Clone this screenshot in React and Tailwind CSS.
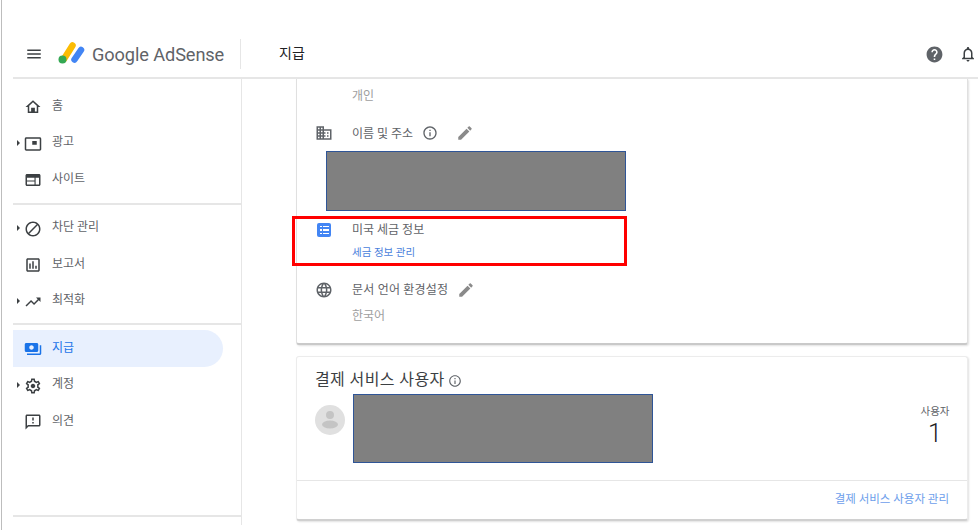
import React from "react";

const KR = "font-['Roboto','Noto_Sans_CJK_KR',sans-serif]";

const paths = {
  menu: "M3 18h18v-2H3v2zm0-5h18v-2H3v2zm0-7v2h18V6H3z",
  home: "M12 5.69l5 4.5V18H7v-7.81l5-4.5M12 3L2 12h3v8h14v-8h3L12 3zM9.500 13h5v5h-5z",
  ads: "M17 8h-6v5h6V8zm4-5H3c-1.1 0-2 .9-2 2v14c0 1.1.9 1.98 2 1.98h18c1.1 0 2-.88 2-1.98V5c0-1.1-.9-2-2-2zm0 16.01H3V4.98h18v14.03z",
  sites: "M20 4H4c-1.1 0-2 .9-2 2v12c0 1.1.9 2 2 2h16c1.1 0 2-.9 2-2V6c0-1.1-.9-2-2-2zM4 18v-4h10v4H4zm0-5.5V9h10v3.5H4zM20 18h-4.500V9H20v9z",
  block: "M12 2C6.48 2 2 6.48 2 12s4.48 10 10 10 10-4.48 10-10S17.52 2 12 2zM4 12c0-4.42 3.58-8 8-8 1.85 0 3.55.63 4.9 1.69L5.69 16.9C4.63 15.55 4 13.85 4 12zm8 8c-1.85 0-3.55-.63-4.9-1.69L18.31 7.1C19.37 8.45 20 10.15 20 12c0 4.42-3.58 8-8 8z",
  report: "M19 3H5c-1.1 0-2 .9-2 2v14c0 1.1.9 2 2 2h14c1.1 0 2-.9 2-2V5c0-1.1-.9-2-2-2zm0 16H5V5h14v14zM7 10h2v7H7zm4-3h2v10h-2zm4 6h2v4h-2z",
  trend: "M16 6l2.29 2.29-4.88 4.88-4-4L2 16.59 3.41 18l6-6 4 4 6.3-6.29L22 12V6z",
  pay: "M19 14V6c0-1.1-.9-2-2-2H3c-1.1 0-2 .9-2 2v8c0 1.1.9 2 2 2h14c1.1 0 2-.9 2-2zm-9-1c-1.66 0-3-1.34-3-3s1.34-3 3-3 3 1.34 3 3-1.34 3-3 3zm13-6v11c0 1.1-.9 2-2 2H4v-2h17V7h2z",
  gear: "M19.43 12.98c.04-.32.07-.64.07-.98 0-.34-.03-.66-.07-.98l2.11-1.65c.19-.15.24-.42.12-.64l-2-3.46c-.09-.16-.26-.25-.44-.25-.06 0-.12.01-.17.03l-2.49 1c-.52-.4-1.08-.73-1.69-.98l-.38-2.65C14.46 2.18 14.25 2 14 2h-4c-.25 0-.46.18-.49.42l-.38 2.65c-.61.25-1.17.59-1.69.98l-2.49-1c-.06-.02-.12-.03-.18-.03-.17 0-.34.09-.43.25l-2 3.46c-.13.22-.07.49.12.64l2.11 1.65c-.04.32-.07.65-.07.98 0 .33.03.66.07.98l-2.11 1.65c-.19.15-.24.42-.12.64l2 3.46c.09.16.26.25.44.25.06 0 .12-.01.17-.03l2.49-1c.52.4 1.08.73 1.69.98l.38 2.65c.03.24.24.42.49.42h4c.25 0 .46-.18.49-.42l.38-2.65c.61-.25 1.17-.59 1.69-.98l2.49 1c.06.02.12.03.18.03.17 0 .34-.09.43-.25l2-3.46c.12-.22.07-.49-.12-.64l-2.11-1.65zm-1.98-1.71c.04.31.05.52.05.73 0 .21-.02.43-.05.73l-.14 1.13.89.7 1.08.84-.7 1.21-1.27-.51-1.04-.42-.9.68c-.43.32-.84.56-1.25.73l-1.06.43-.16 1.13-.2 1.35h-1.4l-.19-1.35-.16-1.13-1.06-.43c-.43-.18-.83-.41-1.23-.71l-.91-.7-1.06.43-1.27.51-.7-1.21 1.08-.84.89-.7-.14-1.13c-.03-.31-.05-.54-.05-.74s.02-.43.05-.73l.14-1.13-.89-.7-1.08-.84.7-1.21 1.27.51 1.04.42.9-.68c.43-.32.84-.56 1.25-.73l1.06-.43.16-1.13.2-1.35h1.39l.19 1.35.16 1.13 1.06.43c.43.18.83.41 1.23.71l.91.7 1.06-.43 1.27-.51.7 1.21-1.07.85-.89.7.14 1.13zM12 9c-1.66 0-3 1.34-3 3s1.34 3 3 3 3-1.34 3-3-1.34-3-3-3z",
  feedback: "M20 2H4c-1.1 0-1.99.9-1.99 2L2 22l4-4h14c1.1 0 2-.9 2-2V4c0-1.1-.9-2-2-2zm0 14H5.17L4 17.17V4h16v12zm-9-4h2v2h-2zm0-6h2v4h-2z",
  domain: "M12 7V3H2v18h20V7H12zM6 19H4v-2h2v2zm0-4H4v-2h2v2zm0-4H4V9h2v2zm0-4H4V5h2v2zm4 12H8v-2h2v2zm0-4H8v-2h2v2zm0-4H8V9h2v2zm0-4H8V5h2v2zm10 12h-8v-2h2v-2h-2v-2h2v-2h-2V9h8v10zm-2-8h-2v2h2v-2zm0 4h-2v2h2v-2z",
  info: "M11 7h2v2h-2zm0 4h2v6h-2zm1-9C6.48 2 2 6.48 2 12s4.48 10 10 10 10-4.48 10-10S17.52 2 12 2zm0 18c-4.41 0-8-3.59-8-8s3.59-8 8-8 8 3.59 8 8-3.59 8-8 8z",
  edit: "M3 17.25V21h3.75L17.81 9.94l-3.75-3.75L3 17.25zM20.71 7.04c.39-.39.39-1.02 0-1.41l-2.34-2.34c-.39-.39-1.02-.39-1.41 0l-1.83 1.83 3.75 3.75 1.83-1.83z",
  globe: "M11.99 2C6.47 2 2 6.48 2 12s4.47 10 9.99 10C17.52 22 22 17.52 22 12S17.52 2 11.99 2zm6.93 6h-2.95c-.32-1.25-.78-2.45-1.38-3.56 1.84.63 3.37 1.91 4.33 3.56zM12 4.04c.83 1.2 1.48 2.53 1.91 3.96h-3.82c.43-1.43 1.08-2.76 1.91-3.96zM4.26 14C4.1 13.36 4 12.69 4 12s.1-1.36.26-2h3.38c-.08.66-.14 1.32-.14 2 0 .68.06 1.34.14 2H4.26zm.82 2h2.95c.32 1.25.78 2.45 1.38 3.56-1.84-.63-3.37-1.9-4.33-3.56zm2.95-8H5.08c.96-1.66 2.49-2.93 4.33-3.56C8.81 5.55 8.35 6.75 8.03 8zM12 19.96c-.83-1.2-1.48-2.53-1.91-3.96h3.82c-.43 1.43-1.08 2.76-1.91 3.96zM14.34 14H9.66c-.09-.66-.16-1.32-.16-2 0-.68.07-1.35.16-2h4.68c.09.65.16 1.32.16 2 0 .68-.07 1.34-.16 2zm.25 5.56c.6-1.11 1.06-2.31 1.38-3.56h2.95c-.96 1.65-2.49 2.93-4.33 3.56zM16.36 14c.08-.66.14-1.32.14-2 0-.68-.06-1.34-.14-2h3.38c.16.64.26 1.31.26 2s-.1 1.36-.26 2h-3.38z",
  help: "M12 2C6.48 2 2 6.48 2 12s4.48 10 10 10 10-4.48 10-10S17.52 2 12 2zm1 17h-2v-2h2v2zm2.07-7.750l-.9.92C13.45 12.9 13 13.5 13 15h-2v-.5c0-1.1.45-2.1 1.17-2.83l1.24-1.26c.37-.36.59-.86.59-1.41 0-1.1-.9-2-2-2s-2 .9-2 2H8c0-2.21 1.79-4 4-4s4 1.79 4 4c0 .88-.36 1.68-.93 2.25z",
  bell: "M12 22c1.1 0 2-.9 2-2h-4c0 1.1.9 2 2 2zm6-6v-5c0-3.07-1.63-5.64-4.5-6.32V4c0-.83-.67-1.5-1.5-1.5s-1.5.67-1.5 1.5v.68C7.64 5.36 6 7.92 6 11v5l-2 2v1h16v-1l-2-2zm-2 1H8v-6c0-2.48 1.51-4.5 4-4.5s4 2.02 4 4.500v6z",
};

function Icon({ name, className }) {
  return (
    <svg viewBox="0 0 24 24" fill="currentColor" className={className}>
      <path d={paths[name]} />
    </svg>
  );
}

function Logo() {
  return (
    <svg viewBox="0 0 28 24" className="w-[28px] h-[24px] shrink-0">
      <line x1="7" y1="18" x2="15.500" y2="4.500" stroke="#fbbc04" strokeWidth="6.500" strokeLinecap="round" />
      <line x1="17.500" y1="18.500" x2="24" y2="9" stroke="#4285f4" strokeWidth="6.500" strokeLinecap="round" />
      <circle cx="5.500" cy="18.500" r="4" fill="#34a853" />
    </svg>
  );
}

function NavItem({ icon, label, arrow, active }) {
  return (
    <div className={"flex items-center h-[36.5px] w-[210px] rounded-r-full " + (active ? "bg-[#e8f0fe]" : "")}>
      <div className="w-[4px] ml-[3px] mr-[4px] flex justify-center">
        {arrow && <div className="w-0 h-0 border-y-[3px] border-y-transparent border-l-[3px] border-l-[#3c4043]" />}
      </div>
      <Icon name={icon} className={"w-[18px] h-[18px] mt-[2px] " + (active ? "text-[#1a73e8]" : "text-[#3c4043]")} />
      <span className={"ml-[10px] text-[12px] leading-none mb-px " + (active ? "text-[#1a73e8]" : "text-[#5f6368]")}>{label}</span>
    </div>
  );
}

function Sidebar() {
  return (
    <div className="w-[229px] shrink-0 border-r border-[#e6e6e6] h-[446px] flex flex-col">
      <div className="pt-[9px] pb-[5px] border-b-2 border-[#e6e6e6]">
        <NavItem icon="home" label="홈" />
        <NavItem icon="ads" label="광고" arrow />
        <NavItem icon="sites" label="사이트" />
      </div>
      <div className="pt-[5px] pb-[4px] border-b-2 border-[#e6e6e6]">
        <NavItem icon="block" label="차단 관리" arrow />
        <NavItem icon="report" label="보고서" />
        <NavItem icon="trend" label="최적화" arrow />
      </div>
      <div className="pt-[5px] flex-1 border-b-2 border-[#e6e6e6] mb-[8px]">
        <NavItem icon="pay" label="지급" active />
        <NavItem icon="gear" label="계정" arrow />
        <NavItem icon="feedback" label="의견" />
      </div>
    </div>
  );
}

function Redacted({ className }) {
  return <div className={"bg-[#808080] border border-[#2f5597] w-[300px] " + className} />;
}

function DetailsCard() {
  return (
    <div className="w-[672px] h-[266px] bg-white border-x border-[#e0e0e0] border-b-2 border-b-[#c9c9c9] rounded-b-[3px] shadow-[1px_1px_2px_rgba(0,0,0,0.12)]">
      <div className="h-[32px] pt-[2px] pl-[55px] flex items-center text-[12px] text-[#9e9e9e]">개인</div>

      <div className="mt-[11px] h-[22px] flex items-center">
        <Icon name="domain" className="w-[18px] h-[18px] ml-[18px] text-[#5f6368]" />
        <span className="ml-[19px] pt-[2px] text-[12px] text-[#5f6368]">이름 및 주소</span>
        <Icon name="info" className="w-[16px] h-[16px] ml-[9px] text-[#5f6368]" />
        <Icon name="edit" className="w-[18px] h-[18px] ml-[18px] text-[#8a8a8a]" />
      </div>
      <Redacted className="h-[60px] mt-[7px] ml-[29px]" />

      <div className="mt-[5px] -ml-[5px] w-[335px] h-[50px] border-[3px] border-[#ff0000] flex">
        <div className="w-[14px] h-[14px] ml-[22px] mt-[4px] bg-[#4285f4] rounded-[2px] flex flex-col justify-center gap-[2px] px-[2.500px] shrink-0">
          {[0, 1, 2].map((i) => (
            <div key={i} className="flex gap-[1px]">
              <div className="w-[2px] h-[1.500px] bg-white" />
              <div className="flex-1 h-[1.500px] bg-white" />
            </div>
          ))}
        </div>
        <div className="ml-[21px]">
          <div className="h-[20px] mt-px flex items-center text-[12px] text-[#5f6368]">미국 세금 정보</div>
          <div className="mt-[3px] h-[20px] flex items-center text-[10.500px] text-[#4a7fdc]">세금 정보 관리</div>
        </div>
      </div>

      <div className="mt-[13px] h-[22px] flex items-center">
        <Icon name="globe" className="w-[18px] h-[18px] ml-[18px] text-[#5f6368]" />
        <span className="ml-[19px] text-[12px] tracking-[0.2px] text-[#5f6368]">문서 언어 환경설정</span>
        <Icon name="edit" className="w-[18px] h-[18px] ml-[9px] text-[#8a8a8a]" />
      </div>
      <div className="mt-[4px] h-[22px] pl-[55px] flex items-center text-[12px] text-[#9e9e9e]">한국어</div>
    </div>
  );
}

function UsersCard() {
  return (
    <div className="mt-[11px] w-[672px] h-[165px] bg-white border-x border-t border-[#ececec] border-b-2 border-b-[#d0d0d0] rounded-[3px] flex flex-col shadow-[1px_1px_2px_rgba(0,0,0,0.12)]">
      <div className="h-[123px] flex">
        <div className="flex-1 pl-[18px]">
          <div className="h-[37px] pt-[8px] flex items-center">
            <span className="text-[16px] text-[#3c4043] tracking-[0.4px]">결제 서비스 사용자</span>
            <Icon name="info" className="w-[14px] h-[14px] ml-[3px] mt-[2px] text-[#5f6368]" />
          </div>
          <div className="flex items-start">
            <div className="mt-[11px] w-[30px] h-[30px] rounded-full bg-[#e0e0e0] flex items-center justify-center">
              <svg viewBox="0 0 30 30" className="w-[30px] h-[30px]" fill="#c4c4c4">
                <circle cx="15" cy="10" r="4" />
                <ellipse cx="15" cy="19.500" rx="8" ry="4" />
              </svg>
            </div>
            <Redacted className="h-[69px] ml-[8px]" />
          </div>
        </div>
        <div className="w-[60px] mr-[2px] pt-[48px] flex flex-col items-center">
          <div className="text-[10.500px] text-[#5f6368] leading-[14px]">사용자</div>
          <div className="text-[25px] font-light leading-[28px] text-[#202124] mt-px">1</div>
        </div>
      </div>
      <div className="flex-1 border-t border-[#e6e6e6] flex items-center justify-end pr-[18px]">
        <span className="text-[11.500px] text-[#6d9eeb]">결제 서비스 사용자 관리</span>
      </div>
    </div>
  );
}

export default function App() {
  return (
    <div className={"w-[978px] h-[530px] overflow-hidden bg-white ml-px border-l border-[#bdbdbd] pl-[11px] pt-[33px] " + KR}>
      <div className="h-[46px] pb-[2px] flex items-center border-b-2 border-[#e6e6e6] -mr-px">
        <Icon name="menu" className="w-[18px] h-[18px] ml-[12px] text-[#3c4043]" />
        <div className="ml-[14px] -mt-[3px]"><Logo /></div>
        <span className="ml-[7px] mt-[2px] text-[18.200px] tracking-[-0.1px] text-[#5f6368] font-['Roboto',sans-serif] w-[131px] whitespace-nowrap">Google AdSense</span>
        <div className="ml-[17px] w-px h-[30px] bg-[#e6e6e6]" />
        <span className="ml-[38px] -mt-px text-[14px] text-[#202124]">지급</span>
        <div className="flex-1" />
        <Icon name="help" className="w-[19px] h-[19px] text-[#5f6368]" />
        <Icon name="bell" className="w-[18px] h-[18px] ml-[15px] mr-[3px] text-[#3c4043]" />
      </div>
      <div className="flex">
        <Sidebar />
        <div className="pl-[54px]">
          <DetailsCard />
          <UsersCard />
        </div>
      </div>
    </div>
  );
}
